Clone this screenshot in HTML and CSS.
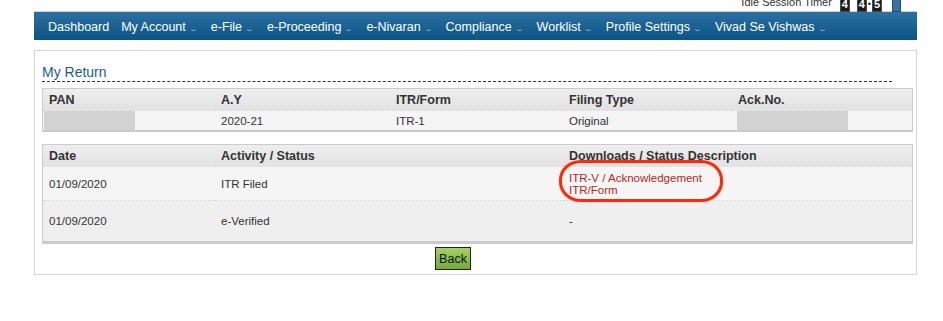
FILE: index.html
```html
<!DOCTYPE html>
<html lang="en">
<head>
    <meta charset="UTF-8" />
    <title>My Return</title>
    <link rel="stylesheet" href="styles.css">
</head>
<body>
    <div class="page">
        <div class="topbar">
            <span class="timer-label">Idle Session Timer</span>
            <span class="digit first">4</span>
            <span class="digit">4</span>
            <span class="sep">&bull;</span>
            <span class="digit">5</span>
            <span class="timer-btn"></span>
        </div>

        <ul class="nav">
            <li>Dashboard</li>
            <li>My Account<span class="caret"></span></li>
            <li>e-File<span class="caret"></span></li>
            <li>e-Proceeding<span class="caret"></span></li>
            <li>e-Nivaran<span class="caret"></span></li>
            <li>Compliance<span class="caret"></span></li>
            <li>Worklist<span class="caret"></span></li>
            <li>Profile Settings<span class="caret"></span></li>
            <li>Vivad Se Vishwas<span class="caret"></span></li>
        </ul>

        <div class="panel">
            <h2 class="panel-title">My Return</h2>

            <table class="grid summary">
                <colgroup>
                    <col class="c1"><col class="c2"><col class="c3"><col class="c4"><col>
                </colgroup>
                <tr>
                    <th>PAN</th>
                    <th>A.Y</th>
                    <th>ITR/Form</th>
                    <th>Filing Type</th>
                    <th>Ack.No.</th>
                </tr>
                <tr>
                    <td class="masked"><span class="redact pan"></span></td>
                    <td>2020-21</td>
                    <td>ITR-1</td>
                    <td>Original</td>
                    <td class="masked"><span class="redact ack"></span></td>
                </tr>
            </table>

            <table class="grid activity">
                <colgroup>
                    <col class="c1"><col class="c2wide"><col>
                </colgroup>
                <tr>
                    <th>Date</th>
                    <th>Activity / Status</th>
                    <th>Downloads / Status Description</th>
                </tr>
                <tr class="row-filed">
                    <td>01/09/2020</td>
                    <td>ITR Filed</td>
                    <td>
                        <div class="links">
                            <a href="#">ITR-V / Acknowledgement</a><br>
                            <a href="#">ITR/Form</a>
                            <span class="mark"></span>
                        </div>
                    </td>
                </tr>
                <tr class="row-verified">
                    <td>01/09/2020</td>
                    <td>e-Verified</td>
                    <td>-</td>
                </tr>
            </table>

            <div class="actions">
                <button class="btn-back">Back</button>
            </div>
        </div>
    </div>
</body>
</html>
```

FILE: styles.css
```css
html, body {
    margin: 0;
    padding: 0;
    background: #fff;
}

body {
    font-family: "Liberation Sans", Arial, sans-serif;
    color: #333;
}

.page {
    margin-left: 34px;
    width: 883px;
}

/* idle timer strip, top half is cut off by the window */
.topbar {
    height: 11px;
    display: flex;
    justify-content: flex-end;
    align-items: flex-end;
    padding-right: 16px;
}

.timer-label {
    font-size: 11px;
    line-height: 13px;
    color: #333;
    margin: 0 8px 2px 0;
}

.digit {
    width: 10px;
    height: 15px;
    background: #1c1c1c;
    border: 1px solid #4a4a4a;
    box-sizing: border-box;
    color: #fff;
    font-weight: bold;
    font-size: 11px;
    line-height: 12px;
    text-align: center;
    margin-bottom: -1px;
}

.digit.first {
    margin-right: 7px;
}

.sep {
    font-size: 9px;
    line-height: 8px;
    margin: 0 1px 3px 1px;
    color: #222;
}

.timer-btn {
    width: 9px;
    height: 15px;
    background: #3572a0;
    border: 1px solid #1d4f78;
    box-sizing: border-box;
    margin-left: 10px;
    margin-bottom: -1px;
}

/* main menu */
.nav {
    list-style: none;
    margin: 0;
    padding: 0 0 0 14px;
    height: 28px;
    border-top: 1px solid #c8d5df;
    background: linear-gradient(#2b70a0, #0b5486);
    display: flex;
    align-items: center;
}

.nav li {
    color: #fff;
    font-size: 12.5px;
    margin-right: 12px;
    display: flex;
    align-items: center;
    padding-top: 1px;
}

.caret {
    width: 5px;
    height: 2px;
    margin: 6px 3px 0 5px;
    border-bottom: 1px solid #8fb0c9;
    border-radius: 0 0 3px 3px;
}

/* content box */
.panel {
    margin-top: 10px;
    border: 1px solid #d5d5d5;
    padding: 0 3px 4px 7px;
}

.panel-title {
    margin: 13px 21px 0 0;
    padding-bottom: 1px;
    font-size: 14px;
    line-height: 16px;
    font-weight: normal;
    color: #1d5c8c;
    border-bottom: 1px dashed #333;
}

.grid {
    width: 871px;
    border-collapse: separate;
    border-spacing: 0;
    table-layout: fixed;
    border: 1px solid #cbcbcb;
}

.grid col.c1 { width: 172px; }
.grid col.c2 { width: 175px; }
.grid col.c3 { width: 173px; }
.grid col.c4 { width: 169px; }
.grid col.c2wide { width: 348px; }

.grid th {
    height: 21px;
    padding: 0 6px;
    text-align: left;
    font-size: 12.5px;
    font-weight: bold;
    color: #333;
    background: linear-gradient(#eeeeee, #e2e2e2);
    border-bottom: 1px dotted #d9d9d9;
}

.grid td {
    padding: 0 6px;
    font-size: 11.5px;
    color: #333;
    background: #f5f5f5;
}

.summary {
    margin-top: 6px;
    border-bottom-width: 2px;
}

.summary td {
    height: 19px;
}

.grid td.masked {
    padding-left: 1px;
}

.redact {
    display: block;
    height: 19px;
    background: #d2d2d2;
}

.redact.pan {
    width: 91px;
}

.redact.ack {
    width: 111px;
    margin-left: 4px;
}

.activity {
    margin-top: 12px;
    border-bottom-width: 3px;
}

.row-filed td {
    height: 33px;
    border-bottom: 1px dotted #d6d6d6;
}

.row-verified td {
    height: 40px;
    background: #efefef;
}

.links {
    position: relative;
    display: inline-block;
    line-height: 12px;
    padding-top: 1px;
}

.links a {
    color: #ae2a1c;
    text-decoration: none;
}

/* red annotation ring */
.mark {
    position: absolute;
    left: -10px;
    top: -11px;
    width: 164px;
    height: 42px;
    box-sizing: border-box;
    border: 3px solid #ff2a0a;
    border-radius: 22px / 20px;
    box-shadow: 0 0 1px rgba(255, 40, 10, 0.6);
}

.actions {
    padding-left: 393px;
    margin-top: 3px;
    height: 23px;
}

.btn-back {
    width: 36px;
    height: 23px;
    padding: 0;
    border: 1px solid #222;
    border-radius: 0;
    background: linear-gradient(#a7d064, #74a93b);
    font-family: "Liberation Sans", Arial, sans-serif;
    font-size: 12.5px;
    color: #111;
}
```
